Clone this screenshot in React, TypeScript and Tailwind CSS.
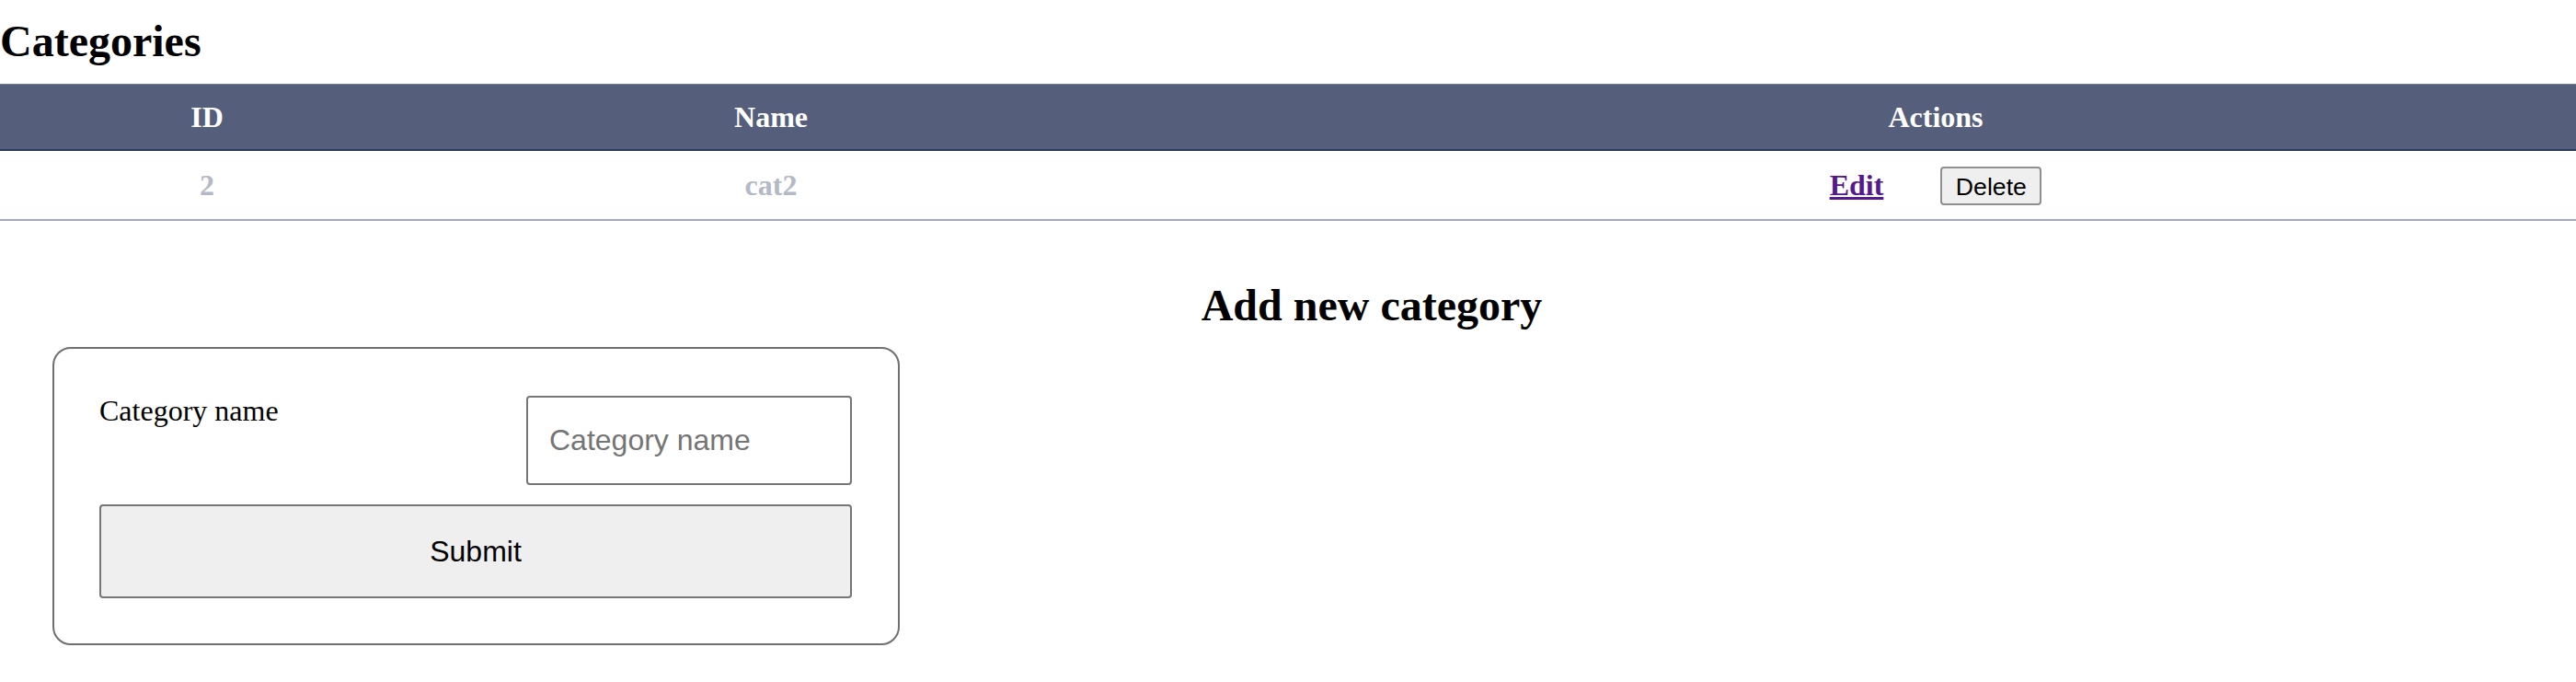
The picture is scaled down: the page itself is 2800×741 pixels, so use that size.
import React from "react"

const serif = "font-['Liberation_Serif','Times_New_Roman',serif]"
const sans = "font-['Liberation_Sans',Arial,sans-serif]"

const categories = [{ id: 2, name: "cat2" }]

/*******************************************************/
/*  Categories table
/*******************************************************/

const CategoriesTable = () => {
  return (
    <table className={`mt-[20px] w-full table-fixed border-collapse ${serif}`}>
      <colgroup>
        <col className="w-[450px]" />
        <col className="w-[776px]" />
        <col />
      </colgroup>
      <thead>
        <tr className="h-[71px] border-t border-b-2 border-t-[#737a92] border-b-[#2b3a5c] bg-[#555e7b] text-[32px] font-bold text-white">
          <th className="p-0 align-middle">ID</th>
          <th className="p-0 align-middle">Name</th>
          <th className="p-0 align-middle">Actions</th>
        </tr>
      </thead>
      <tbody>
        {categories.map(category => (
          <tr
            key={category.id}
            className="h-[76px] border-b-2 border-b-[#a5a8b6] text-[32px] font-bold text-[#b3bac6]"
          >
            <td className="p-0 text-center align-middle">{category.id}</td>
            <td className="p-0 text-center align-middle">{category.name}</td>
            <td className="p-0 align-middle">
              <div className="flex items-baseline justify-center gap-[62px]">
                <a href="#" className="text-[#551a8b] underline">
                  Edit
                </a>
                <button
                  className={`h-[42px] w-[110px] rounded-[4px] border-2 border-[#8f8f8f] bg-[#efefef] text-[26.67px] font-normal text-black ${sans}`}
                >
                  Delete
                </button>
              </div>
            </td>
          </tr>
        ))}
      </tbody>
    </table>
  )
}

/*******************************************************/
/*  Add category form
/*******************************************************/

const AddCategoryForm = () => {
  return (
    <form className="mt-[19px] ml-[57px] w-[921px] rounded-[20px] border-2 border-[#6f6f6f] pt-[51px] pr-[50px] pb-[49px] pl-[49px]">
      <div className="flex items-start justify-between">
        <label className={`text-[32px] leading-[32px] text-black ${serif}`}>Category name</label>
        <input
          type="text"
          placeholder="Category name"
          className={`h-[97px] w-[354px] rounded-[4px] border-2 border-[#767676] bg-white px-[23px] text-[32px] text-black placeholder:text-[#757575] ${sans}`}
        />
      </div>
      <button
        type="button"
        className={`mt-[21px] h-[102px] w-full rounded-[4px] border-2 border-[#767676] bg-[#efefef] text-[32px] text-black ${sans}`}
      >
        Submit
      </button>
    </form>
  )
}

export default function App() {
  return (
    <div className="w-full overflow-hidden bg-white">
      <div className="w-[2982px] pt-[18px] pb-[30px]">
        <h2 className={`text-[48px] leading-[53px] font-bold text-black ${serif}`}>Categories</h2>
        <CategoriesTable />
        <h2 className={`mt-[65px] text-center text-[48px] leading-[53px] font-bold text-black ${serif}`}>
          Add new category
        </h2>
        <AddCategoryForm />
      </div>
    </div>
  )
}
